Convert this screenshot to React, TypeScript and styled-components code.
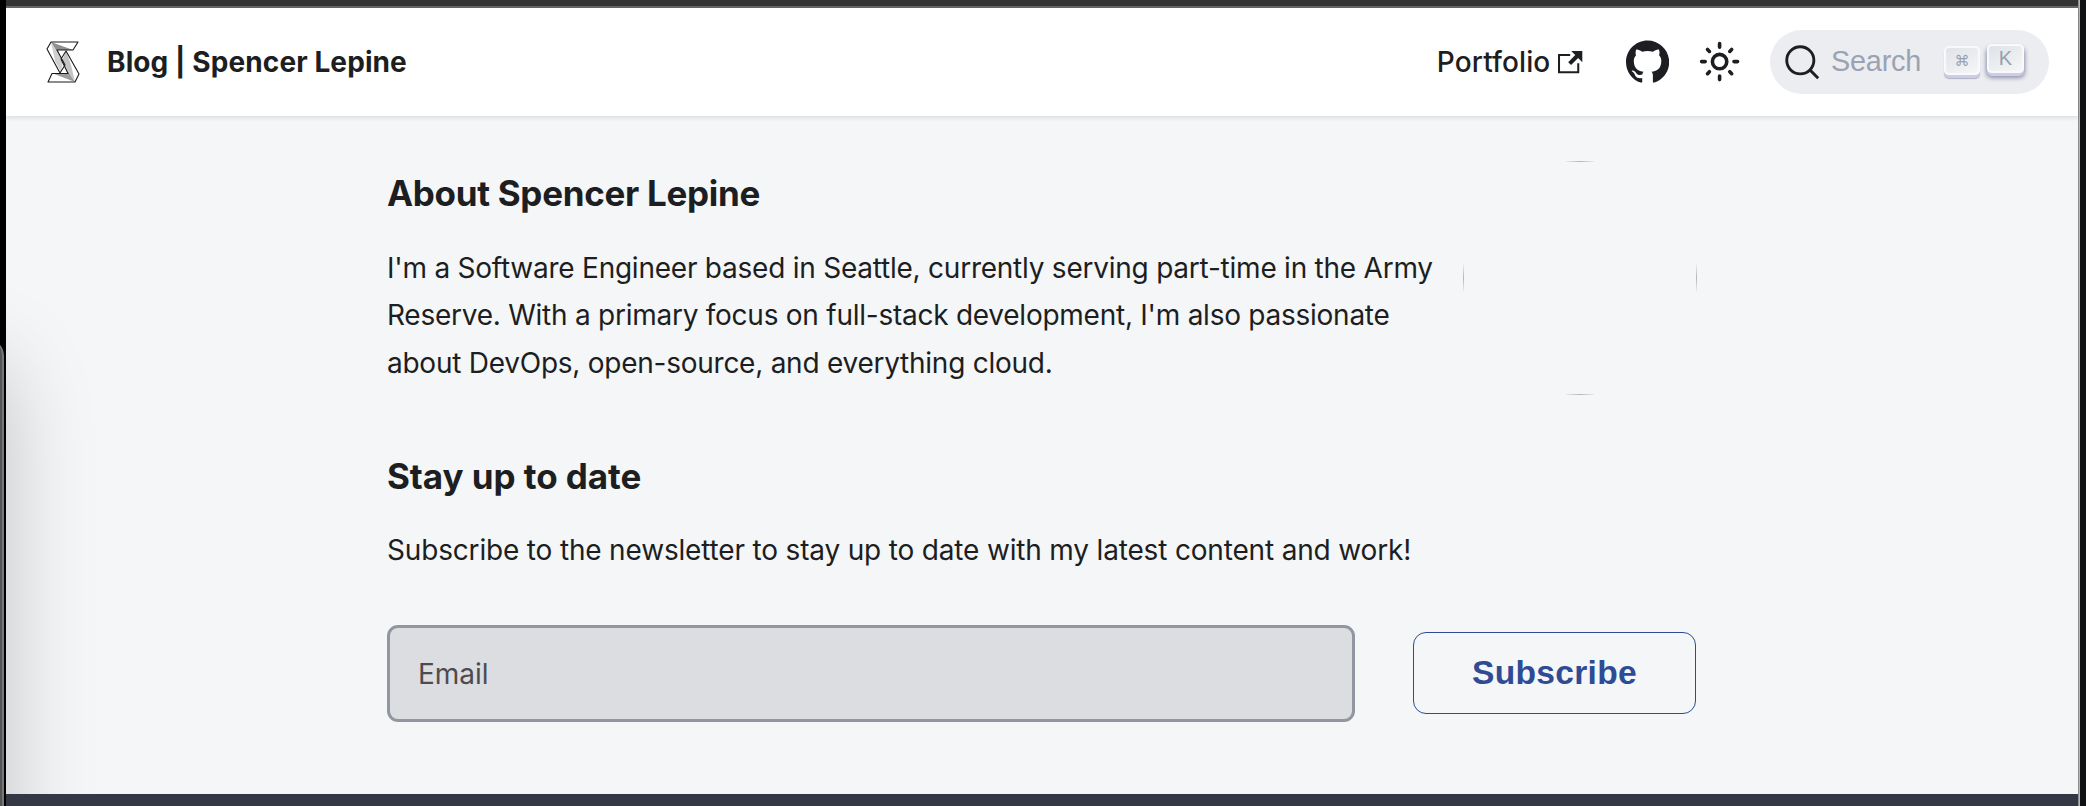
import React from 'react';
import styled, { createGlobalStyle } from 'styled-components';

const GlobalStyle = createGlobalStyle`
  * { box-sizing: border-box; }
  body {
    margin: 0;
    overflow: hidden;
    background: #0d0d0f;
    color: #1c1e21;
    font-family: Inter, "Liberation Sans", sans-serif;
  }
`;

const Desktop = styled.div`
  position: relative;
  width: 2086px;
  height: 806px;
  padding: 0 6px;
  display: flex;
  background: linear-gradient(to right, #000 6px, #101112 6px);
  overflow: hidden;
`;

const BrowserWindow = styled.div`
  flex: 1;
  display: flex;
  flex-direction: column;
  background: #f4f6f8;
`;

const TopEdge = styled.div`
  height: 8px;
  flex: none;
  background: #343434;
  border-bottom: 2px solid #666;
`;

const Navbar = styled.nav`
  position: relative;
  flex: none;
  height: 108px;
  padding: 0 29px 0 40px;
  display: flex;
  align-items: center;
  background: #fff;
  box-shadow: 0 2px 4px rgba(0, 0, 0, 0.1);
`;

const Brand = styled.a`
  display: flex;
  align-items: center;
  gap: 27px;
  margin-right: auto;
`;

const BrandTitle = styled.b`
  font-size: 28px;
  font-weight: 700;
  letter-spacing: 0.1px;
  white-space: nowrap;
`;

const NavLink = styled.a`
  display: flex;
  align-items: center;
  font-size: 28px;
  font-weight: 500;
  letter-spacing: 0.1px;
  gap: 8px;
  margin-right: 43px;
`;

const GithubIcon = styled.svg`
  margin-right: 29px;
`;

const SunIcon = styled.svg`
  margin-right: 29px;
`;

const SearchButton = styled.div`
  width: 279px;
  height: 64px;
  padding: 0 25px 0 14px;
  display: flex;
  align-items: center;
  border-radius: 32px;
  background: #ebedf0;
`;

const SearchText = styled.span`
  margin: -1px auto 0 11px;
  font-family: "Liberation Sans", sans-serif;
  font-size: 28.8px;
  letter-spacing: -0.2px;
  color: #9ba2b3;
`;

const Key = styled.span<{ $raised?: boolean }>`
  align-self: flex-start;
  width: ${(p) => (p.$raised ? '37px' : '36px')};
  height: 29px;
  margin-left: 7px;
  margin-top: ${(p) => (p.$raised ? '14px' : '16px')};
  display: flex;
  align-items: center;
  justify-content: center;
  border-radius: 5px;
  background: linear-gradient(-26.5deg, #f8f8f8, #dce0e7);
  box-shadow: inset 0 0 1px 2px #fafafc, 0 3px 0 #cdcde6,
    ${(p) => (p.$raised ? '0 4px 4px 1px rgba(30, 35, 90, 0.45)' : '0 4px 1px rgba(30, 35, 90, 0.3)')};
  font-family: "Liberation Sans", "DejaVu Sans", sans-serif;
  font-size: ${(p) => (p.$raised ? '20px' : '15px')};
  color: #969faf;
`;

const Main = styled.main`
  flex: 1;
  width: 1309px;
  margin-left: 381px;
`;

const AboutRow = styled.section`
  display: flex;
  justify-content: space-between;
  margin-right: -1px;
  padding-top: 45px;
`;

const AboutText = styled.div`
  width: 1060px;
`;

const Heading = styled.h2<{ $spacing: number }>`
  margin: 0;
  padding-top: 10px;
  height: 83.9px;
  font-size: 35px;
  line-height: 45px;
  font-weight: 700;
  letter-spacing: ${(p) => p.$spacing}px;
`;

const Paragraph = styled.p`
  margin: 0;
  font-size: 28px;
  line-height: 47.5px;
  white-space: nowrap;
`;

const Line = styled.span<{ $spacing: number }>`
  display: block;
  letter-spacing: ${(p) => p.$spacing}px;
`;

const Avatar = styled.svg`
  display: block;
  flex: none;
`;

const Newsletter = styled.section`
  padding-top: 48.6px;
`;

const Form = styled.form`
  margin-top: 50px;
  display: flex;
  align-items: center;
  justify-content: space-between;
`;

const EmailInput = styled.input`
  width: 968px;
  height: 97px;
  padding: 2px 29px 0 28px;
  border: 3px solid #9196a0;
  border-radius: 11px;
  background: #dcdde1;
  font: 28px Inter, sans-serif;
  &::placeholder { color: #4b4c50; opacity: 1; }
`;

const SubscribeButton = styled.button`
  width: 283px;
  height: 82px;
  margin-bottom: 1px;
  padding: 0;
  border: 1px solid #2e4b94;
  border-radius: 13px;
  background: transparent;
  color: #2e4b94;
  font: 700 33.6px "Liberation Sans", sans-serif;
  letter-spacing: 0.3px;
`;

const Footer = styled.footer`
  flex: none;
  height: 12px;
  background: #343844;
`;

const RightEdge = styled.div`
  width: 2px;
  background: linear-gradient(to right, #8b8c8d 1px, #b7b8b9 1px);
`;

const OtherWindow = styled.div`
  position: absolute;
  left: -196px;
  top: 338px;
  width: 200px;
  height: 600px;
  border-radius: 18px;
  border-right: 2px solid #777;
  background: #555;
`;

const ShadowClip = styled.div`
  position: absolute;
  left: 6px;
  top: 116px;
  width: 160px;
  height: 678px;
  overflow: hidden;
  pointer-events: none;
`;

const WindowShadow = styled.div`
  position: absolute;
  left: -302px;
  top: 250px;
  width: 300px;
  height: 700px;
  border-radius: 18px;
  box-shadow: 0 0 90px rgba(0, 0, 0, 0.22);
`;

const Logo = () => (
  <svg width="34" height="42" viewBox="0 0 34 42" strokeLinejoin="round">
    <path d="M5 1H32L27 9H11L19 24L14 32L1 8Z" fill="#fff" />
    <path d="M29 41H2L6 32.500H22L15 18L20 10L33 33Z" fill="#fff" />
    <path d="M5 1L27 9H11L17 21Z" fill="#8f8f8f" />
    <path d="M5 1L17 20L15 31L9 20Z" fill="#cfcfcf" />
    <path d="M29 41L7 32.500H22L17 22Z" fill="#9c9c9c" />
    <path d="M29 41L16 20L20 10L25 24Z" fill="#c4c4c4" />
    <g fill="none" stroke="#1a1a1a" strokeWidth="1.100">
      <path d="M5 1H32L27 9H11L19 24L14 32L1 8Z" />
      <path d="M29 41H2L6 32.500H22L15 18L20 10L33 33Z" />
    </g>
  </svg>
);

export default function App() {
  return (
    <>
      <GlobalStyle />
      <Desktop>
        <BrowserWindow>
          <TopEdge />
          <Navbar>
            <Brand>
              <Logo />
              <BrandTitle>Blog | Spencer Lepine</BrandTitle>
            </Brand>
            <NavLink>
              Portfolio
              <svg width="24.300" height="24.300" viewBox="0 0 24 24" fill="currentColor">
                <path d="M21 13v10h-21v-19h12v2h-10v15h17v-8h2zm3-12h-10.988l4.035 4-6.977 7.070 2.828 2.828 6.977-7.070 4.125 4.172v-11z" />
              </svg>
            </NavLink>
            <GithubIcon width="43.200" height="43.200" viewBox="0 0 24 24" fill="currentColor">
              <path d="M12 .297c-6.630 0-12 5.373-12 12 0 5.303 3.438 9.800 8.205 11.385.6.113.82-.258.82-.577 0-.285-.01-1.040-.015-2.040-3.338.724-4.042-1.610-4.042-1.610C4.422 18.070 3.633 17.700 3.633 17.700c-1.087-.744.084-.729.084-.729 1.205.084 1.838 1.236 1.838 1.236 1.070 1.835 2.809 1.305 3.495.998.108-.776.417-1.305.76-1.605-2.665-.3-5.466-1.332-5.466-5.930 0-1.310.465-2.380 1.235-3.220-.135-.303-.54-1.523.105-3.176 0 0 1.005-.322 3.300 1.230.96-.267 1.980-.399 3-.405 1.020.006 2.040.138 3 .405 2.280-1.552 3.285-1.230 3.285-1.230.645 1.653.24 2.873.12 3.176.765.84 1.230 1.910 1.230 3.220 0 4.610-2.805 5.625-5.475 5.920.42.36.81 1.096.81 2.220 0 1.606-.015 2.896-.015 3.286 0 .315.21.69.825.57C20.565 22.092 24 17.592 24 12.297c0-6.627-5.373-12-12-12" />
            </GithubIcon>
            <SunIcon width="43.200" height="43.200" viewBox="0 0 24 24" fill="none" stroke="currentColor" strokeWidth="2" strokeLinecap="round">
              <circle cx="12" cy="12" r="4" />
              <path d="M2 12h2M20 12h2M12 2v2M12 20v2M5.290 5.290l1.060 1.060M17.650 17.650l1.060 1.060M18.710 5.290l-1.060 1.060M6.350 17.650l-1.060 1.060" />
            </SunIcon>
            <SearchButton>
              <svg width="36" height="36" viewBox="0 0 20 20" fill="none" stroke="currentColor" strokeWidth="1.600">
                <path d="M14.386 14.386l4.600 4.600-4.600-4.600c-2.942 2.942-7.712 2.942-10.653 0-2.942-2.942-2.942-7.712 0-10.653 2.942-2.942 7.712-2.942 10.653 0 2.942 2.942 2.942 7.712 0 10.653z" />
              </svg>
              <SearchText>Search</SearchText>
              <Key>⌘</Key>
              <Key $raised>K</Key>
            </SearchButton>
          </Navbar>
          <Main>
            <AboutRow>
              <AboutText>
                <Heading $spacing={-0.3}>About Spencer Lepine</Heading>
                <Paragraph>
                  <Line $spacing={-0.235}>I'm a Software Engineer based in Seattle, currently serving part-time in the Army</Line>
                  <Line $spacing={-0.25}>Reserve. With a primary focus on full-stack development, I'm also passionate</Line>
                  <Line $spacing={-0.25}>about DevOps, open-source, and everything cloud.</Line>
                </Paragraph>
              </AboutText>
              <Avatar width="234" height="234" viewBox="0 0 234 234">
                <defs>
                  <linearGradient id="h">
                    <stop offset="0" stopColor="#b4b5b7" stopOpacity="0.2" />
                    <stop offset="0.5" stopColor="#b4b5b7" />
                    <stop offset="1" stopColor="#b4b5b7" stopOpacity="0.2" />
                  </linearGradient>
                  <linearGradient id="v" x2="0" y2="1">
                    <stop offset="0" stopColor="#b4b5b7" stopOpacity="0.1" />
                    <stop offset="0.5" stopColor="#b4b5b7" />
                    <stop offset="1" stopColor="#b4b5b7" stopOpacity="0.1" />
                  </linearGradient>
                </defs>
                <rect x="103" y="0" width="28" height="1" fill="url(#h)" />
                <rect x="103" y="233" width="28" height="1" fill="url(#h)" />
                <rect x="0" y="103" width="1" height="28" fill="url(#v)" />
                <rect x="233" y="103" width="1" height="28" fill="url(#v)" />
              </Avatar>
            </AboutRow>
            <Newsletter>
              <Heading $spacing={-0.05}>Stay up to date</Heading>
              <Paragraph>
                <Line $spacing={-0.17}>Subscribe to the newsletter to stay up to date with my latest content and work!</Line>
              </Paragraph>
              <Form>
                <EmailInput placeholder="Email" />
                <SubscribeButton type="button">Subscribe</SubscribeButton>
              </Form>
            </Newsletter>
          </Main>
          <Footer />
        </BrowserWindow>
        <RightEdge />
        <ShadowClip>
          <WindowShadow />
        </ShadowClip>
        <OtherWindow />
      </Desktop>
    </>
  );
}
